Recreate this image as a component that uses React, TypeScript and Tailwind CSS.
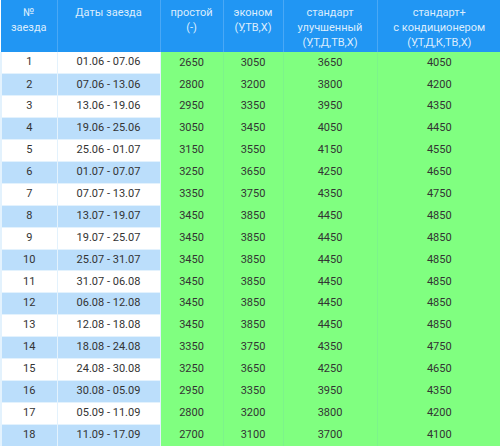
import React from "react";

const rows: [string, string, string, string, string, string][] = [
  ["1", "01.06 - 07.06", "2650", "3050", "3650", "4050"],
  ["2", "07.06 - 13.06", "2800", "3200", "3800", "4200"],
  ["3", "13.06 - 19.06", "2950", "3350", "3950", "4350"],
  ["4", "19.06 - 25.06", "3050", "3450", "4050", "4450"],
  ["5", "25.06 - 01.07", "3150", "3550", "4150", "4550"],
  ["6", "01.07 - 07.07", "3250", "3650", "4250", "4650"],
  ["7", "07.07 - 13.07", "3350", "3750", "4350", "4750"],
  ["8", "13.07 - 19.07", "3450", "3850", "4450", "4850"],
  ["9", "19.07 - 25.07", "3450", "3850", "4450", "4850"],
  ["10", "25.07 - 31.07", "3450", "3850", "4450", "4850"],
  ["11", "31.07 - 06.08", "3450", "3850", "4450", "4850"],
  ["12", "06.08 - 12.08", "3450", "3850", "4450", "4850"],
  ["13", "12.08 - 18.08", "3450", "3850", "4450", "4850"],
  ["14", "18.08 - 24.08", "3350", "3750", "4350", "4750"],
  ["15", "24.08 - 30.08", "3250", "3650", "4250", "4650"],
  ["16", "30.08 - 05.09", "2950", "3350", "3950", "4350"],
  ["17", "05.09 - 11.09", "2800", "3200", "3800", "4200"],
  ["18", "11.09 - 17.09", "2700", "3100", "3700", "4100"],
];

export default function App() {
  return (
    <div
      className="w-[500px] h-[446px] overflow-hidden bg-white text-[11px] text-[#333]"
      style={{ fontFamily: "Roboto, 'Noto Sans', sans-serif" }}
    >
      <table className="table-fixed w-[500px] border-collapse">
        <colgroup>
          <col className="w-[56px]" />
          <col className="w-[103px]" />
          <col className="w-[63px]" />
          <col className="w-[60px]" />
          <col className="w-[94px]" />
          <col className="w-[124px]" />
        </colgroup>
        <thead>
          <tr className="h-[52px] bg-[#2196f3] text-[#dcedfd] align-top leading-[15px] font-normal">
            <th className="font-normal pt-[5px] border-r border-[#4aa8f5]">
              №<br />заезда
            </th>
            <th className="font-normal pt-[5px] border-r border-[#4aa8f5]">Даты заезда</th>
            <th className="font-normal pt-[5px] border-r border-[#4aa8f5]">
              простой<br />(-)
            </th>
            <th className="font-normal pt-[5px] border-r border-[#4aa8f5]">
              эконом<br />(У,ТВ,Х)
            </th>
            <th className="font-normal pt-[5px] border-r border-[#4aa8f5]">
              стандарт<br />улучшенный<br />(У,Т,Д,ТВ,Х)
            </th>
            <th className="font-normal pt-[5px]">
              стандарт+<br />с кондиционером<br />(У,Т,Д,К,ТВ,Х)
            </th>
          </tr>
        </thead>
        <tbody>
          {rows.map((r, i) => {
            const bg = i % 2 === 0 ? "bg-white" : "bg-[#bbdefb]";
            return (
              <tr key={r[0]} className="h-[21.9px] text-center">
                <td className={`${bg} p-0 border-l-2 border-r border-b border-[#e3f2fd]`}>{r[0]}</td>
                <td className={`${bg} p-0 border-r border-b border-[#e3f2fd]`}>{r[1]}</td>
                <td className="bg-[#80ff80] p-0 border-r border-[#7cf48a]">{r[2]}</td>
                <td className="bg-[#80ff80] p-0 border-r border-[#7cf48a]">{r[3]}</td>
                <td className="bg-[#80ff80] p-0 border-r border-[#7cf48a]">{r[4]}</td>
                <td className="bg-[#80ff80] p-0">{r[5]}</td>
              </tr>
            );
          })}
        </tbody>
      </table>
    </div>
  );
}
